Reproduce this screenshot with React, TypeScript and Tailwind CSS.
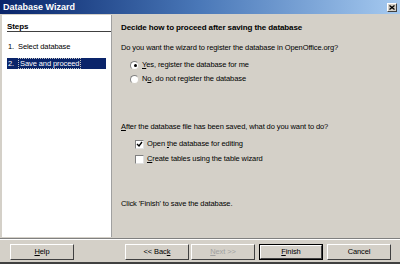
import React from 'react';

const font = { fontFamily: '"Liberation Sans", Arial, sans-serif' };

function Btn({ label, u, rest, disabled, isDefault }: { label?: string; u: string; rest: string; disabled?: boolean; isDefault?: boolean }) {
  return (
    <div
      className={`w-[64px] h-[16px] bg-[#d4d0c8] ${isDefault ? 'border border-black' : ''}`}
    >
      <div className="h-full w-full border-t border-l border-white border-r border-b border-r-[#404040] border-b-[#404040] flex items-center justify-center">
        <span className={`text-[7.5px] tracking-[-0.1px] leading-none ${disabled ? 'text-[#a0a0a0]' : 'text-black'}`}>
          {label}
          <span className="underline">{u}</span>
          {rest}
        </span>
      </div>
    </div>
  );
}

function Radio({ checked }: { checked?: boolean }) {
  return (
    <span className="relative inline-block w-[9px] h-[9px] rounded-full bg-white border border-t-[#808080] border-l-[#808080] border-r-[#d4d0c8] border-b-[#d4d0c8]">
      {checked && <span className="absolute left-[2.5px] top-[2.5px] w-[3px] h-[3px] rounded-full bg-black" />}
    </span>
  );
}

function Check({ checked }: { checked?: boolean }) {
  return (
    <span className="relative inline-block w-[9px] h-[9px] bg-white border border-t-[#808080] border-l-[#808080] border-r-[#e0e0e0] border-b-[#e0e0e0]">
      {checked && (
        <svg className="absolute left-[0px] top-[0px]" width="7" height="7" viewBox="0 0 7 7">
          <path d="M1 3 L3 5 L6 1" stroke="black" strokeWidth="1.4" fill="none" />
        </svg>
      )}
    </span>
  );
}

export default function App() {
  return (
    <div className="w-[400px] h-[264px] bg-[#d4d0c8] flex flex-col border-b-2 border-b-[#404040] overflow-hidden" style={font}>
      {/* title bar */}
      <div className="h-[14px] flex items-center justify-between bg-gradient-to-r from-[#0a246a] via-[#4a78b8] to-[#a6caf0] pl-[3px] pr-[3px]">
        <span className="text-white font-bold text-[9px] leading-none">Database Wizard</span>
        <div className="w-[10px] h-[9px] bg-[#d4d0c8] border-t border-l border-white border-r border-b border-r-[#404040] border-b-[#404040] flex items-center justify-center">
          <svg width="6" height="5" viewBox="0 0 6 5">
            <path d="M0.5 0.5 L5.5 4.5 M5.5 0.5 L0.5 4.5" stroke="black" strokeWidth="1.3" />
          </svg>
        </div>
      </div>

      <div className="flex mt-[1px] h-[222px]">
        {/* steps panel */}
        <div className="w-[110px] ml-[2px] bg-white border-r border-r-[#a0a0a0] pt-[6px] pl-[5px] text-[7.5px] tracking-[-0.1px] leading-[12px] text-black">
          <div className="font-bold h-[11px] border-b border-[#404040] leading-[11px] text-[8px]">Steps</div>
          <div className="mt-[9px] pl-[1px]">1.&nbsp;&nbsp;Select database</div>
          <div className="mt-[5px] mr-[5px] h-[11px] bg-[#0a246a] text-white flex items-center pl-[1px]">
            <span className="leading-none">2.</span>
            <span className="ml-[4px] h-[11px] px-[1px] border border-dotted border-[#c0c0c0] flex items-center leading-none">Save and proceed</span>
          </div>
        </div>

        {/* content */}
        <div className="flex-1 pl-[9px] pt-[7px] text-[7.5px] tracking-[-0.1px] leading-[12px] text-black">
          <div className="font-bold text-[8px]">Decide how to proceed after saving the database</div>
          <div className="mt-[8px]">Do you want the wizard to register the database in OpenOffice.org?</div>
          <div className="mt-[5px] pl-[9px] flex items-center gap-[3px]">
            <Radio checked />
            <span><span className="underline">Y</span>es, register the database for me</span>
          </div>
          <div className="mt-[2px] pl-[9px] flex items-center gap-[3px]">
            <Radio />
            <span>N<span className="underline">o</span>, do not register the database</span>
          </div>
          <div className="mt-[36px]"><span className="underline">A</span>fter the database file has been saved, what do you want to do?</div>
          <div className="mt-[5px] pl-[14px] flex items-center gap-[3px]">
            <Check checked />
            <span>Open <span className="underline">t</span>he database for editing</span>
          </div>
          <div className="mt-[3px] pl-[14px] flex items-center gap-[3px]">
            <Check />
            <span><span className="underline">C</span>reate tables using the table wizard</span>
          </div>
          <div className="mt-[33px]">Click 'Finish' to save the database.</div>
        </div>
      </div>

      {/* separator */}
      <div className="mt-[1px] h-[2px] border-t border-[#808080] border-b border-b-white" />

      {/* buttons */}
      <div className="flex items-center mt-[4px] pl-[10px]">
        <Btn label="" u="H" rest="elp" />
        <div className="ml-[51px]"><Btn label="<< Bac" u="k" rest="" /></div>
        <div className="ml-[2px]"><Btn label="" u="N" rest="ext >>" disabled /></div>
        <div className="ml-[4px]"><Btn label="" u="F" rest="inish" isDefault /></div>
        <div className="ml-[4px]"><Btn label="Cancel" u="" rest="" /></div>
      </div>
    </div>
  );
}
